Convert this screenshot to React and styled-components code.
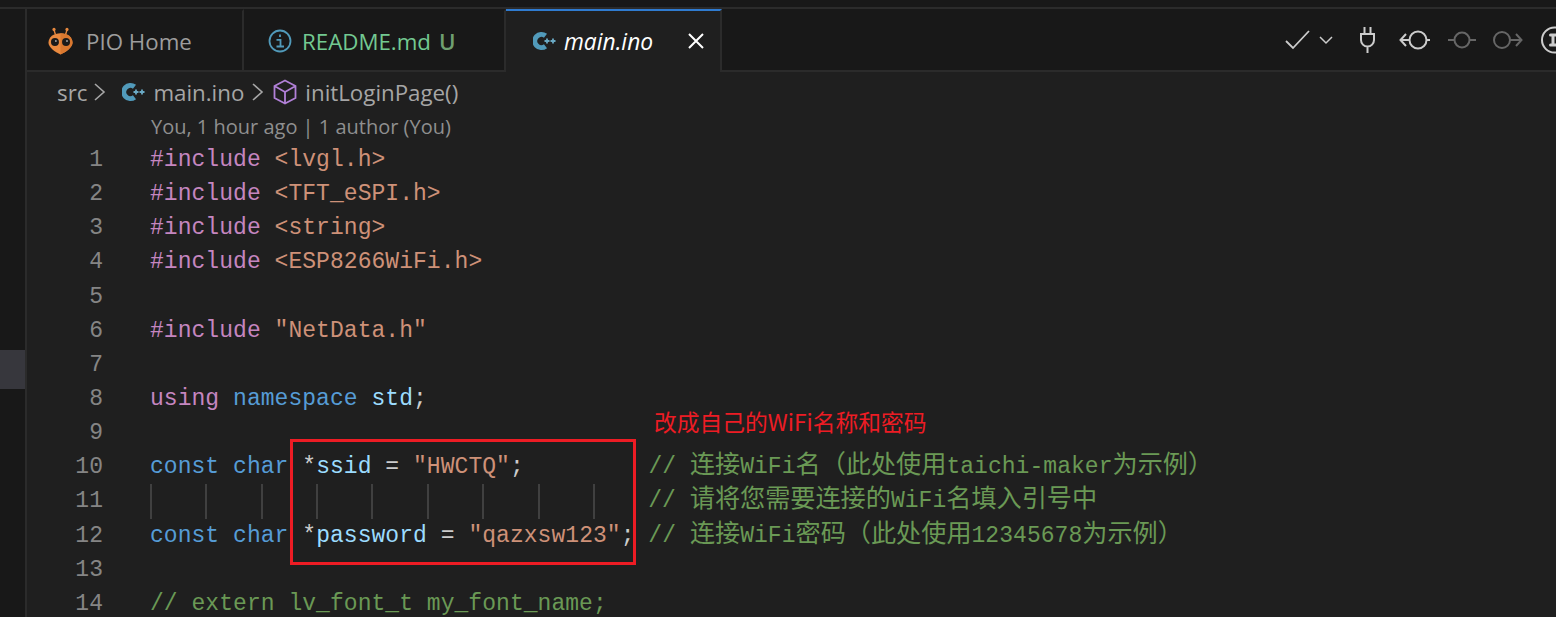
import React from 'react'
import styled, { createGlobalStyle } from 'styled-components'

const GlobalStyle = createGlobalStyle`
  html, body {
    margin: 0;
    padding: 0;
    background: #1f1f1f;
    overflow: hidden;
  }
`

const Window = styled.div`
  width: 1556px;
  height: 617px;
  display: flex;
  flex-direction: column;
  overflow: hidden;
  background: #1f1f1f;
  font-family: 'Open Sans', 'Noto Sans', sans-serif;
`

const TopStrip = styled.div`
  height: 7px;
  flex: none;
  background: #181818;
  border-bottom: 2px solid #2b2b2b;
`

const Body = styled.div`
  flex: 1;
  display: flex;
  min-height: 0;
`

const ActivityBar = styled.div`
  width: 25px;
  flex: none;
  background: #181818;
  border-right: 2px solid #2b2b2b;
  padding-top: 341px;
`

const ActivityItem = styled.div`
  height: 39px;
  background: #37373d;
`

const Main = styled.div`
  flex: 1;
  min-width: 0;
  display: flex;
  flex-direction: column;
  position: relative;
`

const TabBar = styled.div`
  height: 61px;
  flex: none;
  display: flex;
  background: #181818;
  border-bottom: 2px solid #2b2b2b;
`

const Tab = styled.div`
  width: ${p => p.$width}px;
  height: ${p => (p.$active ? '63px' : '61px')};
  flex: none;
  box-sizing: border-box;
  display: flex;
  align-items: center;
  padding-left: ${p => p.$pad}px;
  padding-bottom: ${p => (p.$active ? '2px' : '0')};
  background: ${p => (p.$active ? '#1f1f1f' : '#181818')};
  border-right: 2px solid #2b2b2b;
  border-top: 2px solid ${p => (p.$active ? '#2f7bd0' : '#181818')};
  font-size: ${p => (p.$active ? '22.8px' : '22.3px')};
  color: ${p => p.$color || '#9d9d9d'};
  font-style: ${p => (p.$active ? 'italic' : 'normal')};
`

const TabLabel = styled.span`
  margin-left: ${p => p.$gap}px;
  padding-top: 2px;
  white-space: pre;
`

const GitBadge = styled.span`
  margin-left: 8px;
  padding-top: 2px;
  color: #6f9f70;
  font-weight: 600;
`

const CloseBtn = styled.svg`
  margin-left: 34px;
  width: 18px;
  height: 18px;
`

const Actions = styled.div`
  margin-left: auto;
  display: flex;
  align-items: center;
  height: 100%;
`

const ActionIcon = styled.svg`
  flex: none;
  margin-left: ${p => p.$gap || 0}px;
  display: block;
`

const Crumbs = styled.div`
  height: 40px;
  flex: none;
  display: flex;
  align-items: center;
  padding-left: 30px;
  font-size: 22.3px;
  color: #a6a6a6;
`

const CrumbText = styled.span`
  margin-left: ${p => p.$gap || 0}px;
`

const Blame = styled.div`
  height: 31px;
  flex: none;
  padding-left: 124px;
  font-size: 20px;
  line-height: 29px;
  color: #8f8f8f;
`

const Editor = styled.div`
  font-family: 'Liberation Mono', monospace;
  font-size: 23px;
  letter-spacing: 0.04px;
`

const Line = styled.div`
  height: 34.15px;
  line-height: 34.15px;
  display: flex;
  white-space: pre;
`

const LineNo = styled.div`
  width: 76px;
  flex: none;
  text-align: right;
  color: #858585;
`

const Code = styled.div`
  margin-left: 47px;
  color: #cccccc;
  white-space: pre;
`

const GuideRow = styled.div`
  margin-left: 47px;
  display: flex;
  color: #cccccc;
`

const Guide = styled.span`
  width: 55.36px;
  flex: none;
  box-sizing: border-box;
  border-left: 2px solid #404040;
`

const Keyword = styled.span`
  color: #569cd6;
`
const Control = styled.span`
  color: #c586c0;
`
const Str = styled.span`
  color: #ce9178;
`
const Name = styled.span`
  color: #9cdcfe;
`
const Comment = styled.span`
  color: #6a9955;
`
const Wide = styled.span`
  font-family: 'Noto Sans CJK SC', sans-serif;
  font-size: 25.15px;
  line-height: 0;
  letter-spacing: 0;
`

const RedBox = styled.div`
  position: absolute;
  left: 263px;
  top: 430px;
  width: 346px;
  height: 126px;
  box-sizing: border-box;
  border: 3px solid #ed1c24;
`

const RedNote = styled.div`
  position: absolute;
  left: 627px;
  top: 398px;
  font-family: 'Noto Sans CJK SC', sans-serif;
  font-size: 22.75px;
  line-height: 30px;
  color: #ed1c24;
`

const CppIcon = () => (
  <svg width="24" height="20" viewBox="0 0 24 20" style={{ flex: 'none', display: 'block' }}>
    <path d="M12.500 4.800A6.600 6.600 0 1 0 12.500 15.200" fill="none" stroke="#519aba" strokeWidth="5" />
    <path d="M11.500 10h5M14 7.500v5M17.500 10h5M20 7.500v5" stroke="#6aa9c4" strokeWidth="1.800" />
  </svg>
)

const Chevron = () => (
  <svg width="14" height="20" viewBox="0 0 14 20" style={{ flex: 'none', display: 'block' }}>
    <path d="M2 2l9 8-9 8" fill="none" stroke="#a6a6a6" strokeWidth="1.600" />
  </svg>
)

export default function App() {
  return (
    <Window>
      <GlobalStyle />
      <TopStrip />
      <Body>
        <ActivityBar>
          <ActivityItem />
        </ActivityBar>
        <Main>
          <TabBar>
            <Tab $width={217} $pad={21}>
              <svg width="25" height="28" viewBox="0 0 27 30" style={{ flex: 'none' }}>
                <path d="M8 8L6.500 3M19 8l1.500-5" stroke="#e8893f" strokeWidth="1.500" />
                <circle cx="6.500" cy="2.500" r="1.700" fill="#e8893f" />
                <circle cx="20.500" cy="2.500" r="1.700" fill="#e8893f" />
                <path d="M13.500 6.500C6 6.500 .5 10.500 .5 17c0 5 8 11 13 12.500C18.500 28 26.500 22 26.500 17c0-6.500-5.500-10.500-13-10.500z" fill="#e8893f" />
                <path d="M13.500 6.500C21 6.500 26.500 10.500 26.500 17c0 5-8 11-13 12.500z" fill="#d9782f" />
                <circle cx="7.500" cy="16" r="4.300" fill="#1a1a1a" />
                <circle cx="19.500" cy="16" r="4.300" fill="#1a1a1a" />
                <circle cx="8.500" cy="15" r="1" fill="#a8a8a8" />
                <circle cx="20.500" cy="15" r="1" fill="#a8a8a8" />
              </svg>
              <TabLabel $gap={13}>PIO Home</TabLabel>
            </Tab>
            <Tab $width={262} $pad={24} $color="#73c991">
              <svg width="24" height="24" viewBox="0 0 24 24" style={{ flex: 'none' }}>
                <circle cx="12" cy="12" r="10.500" fill="none" stroke="#519aba" strokeWidth="1.800" />
                <path d="M12 5.500v2.500M8.500 10.800H12.500v6.400M8.500 17.500h7.500" fill="none" stroke="#519aba" strokeWidth="1.800" />
              </svg>
              <TabLabel $gap={10}>README.md</TabLabel>
              <GitBadge>U</GitBadge>
            </Tab>
            <Tab $width={216} $pad={27} $active $color="#ffffff">
              <CppIcon />
              <TabLabel $gap={7}>main.ino</TabLabel>
              <CloseBtn viewBox="0 0 18 18">
                <path d="M2 2l14 14M16 2L2 16" stroke="#ffffff" strokeWidth="2" />
              </CloseBtn>
            </Tab>
            <Actions>
              <ActionIcon width="26" height="22" viewBox="0 0 26 22">
                <path d="M1 12l7 7L24 2" fill="none" stroke="#cccccc" strokeWidth="1.800" />
              </ActionIcon>
              <ActionIcon $gap={8} width="14" height="10" viewBox="0 0 14 10">
                <path d="M1 2l6 6 6-6" fill="none" stroke="#cccccc" strokeWidth="1.500" />
              </ActionIcon>
              <ActionIcon $gap={27} width="15" height="27" viewBox="0 0 15 27">
                <path d="M4.500 1v7M10.500 1v7M1 8h13v6a6.500 6.500 0 0 1-13 0zM7.500 20.500V27" fill="none" stroke="#cccccc" strokeWidth="2" />
              </ActionIcon>
              <ActionIcon $gap={24} width="31" height="20" viewBox="0 0 31 20">
                <circle cx="19" cy="10" r="8.500" fill="none" stroke="#cccccc" strokeWidth="2" />
                <path d="M10.500 10H1.500M7 4l-5.500 6L7 16M27.500 10H31" fill="none" stroke="#cccccc" strokeWidth="2" />
              </ActionIcon>
              <ActionIcon $gap={18} width="28" height="20" viewBox="0 0 28 20">
                <circle cx="14" cy="10" r="7.500" fill="none" stroke="#666666" strokeWidth="2" />
                <path d="M0 10h6.500M21.500 10H28" stroke="#666666" strokeWidth="2" />
              </ActionIcon>
              <ActionIcon $gap={17} width="30" height="20" viewBox="0 0 30 20">
                <circle cx="9" cy="10" r="8" fill="none" stroke="#666666" strokeWidth="2" />
                <path d="M17 10h11.500M23 4l5.500 6-5.500 6" fill="none" stroke="#666666" strokeWidth="2" />
              </ActionIcon>
              <ActionIcon $gap={18} width="15" height="28" viewBox="0 0 15 28">
                <circle cx="13.500" cy="14" r="12.500" fill="none" stroke="#cccccc" strokeWidth="2" />
                <path d="M9.500 9h6M9.500 19h6M12 9v10" fill="none" stroke="#cccccc" strokeWidth="3" strokeLinecap="round" />
              </ActionIcon>
            </Actions>
          </TabBar>
          <Crumbs>
            <CrumbText>src</CrumbText>
            <CrumbText $gap={6} as="span"><Chevron /></CrumbText>
            <CrumbText $gap={15} as="span"><CppIcon /></CrumbText>
            <CrumbText $gap={7}>main.ino</CrumbText>
            <CrumbText $gap={7} as="span"><Chevron /></CrumbText>
            <ActionIcon $gap={8} width="24" height="26" viewBox="0 0 24 26">
              <path d="M12 1.500L22.500 7v12L12 24.500 1.500 19V7zM1.500 7L12 13l10.500-6M12 13v11.500" fill="none" stroke="#b180d7" strokeWidth="1.800" />
            </ActionIcon>
            <CrumbText $gap={8}>initLoginPage()</CrumbText>
          </Crumbs>
          <Blame>You, 1 hour ago | 1 author (You)</Blame>
          <Editor>
            <Line><LineNo>1</LineNo><Code><Control>#include</Control> <Str>&lt;lvgl.h&gt;</Str></Code></Line>
            <Line><LineNo>2</LineNo><Code><Control>#include</Control> <Str>&lt;TFT_eSPI.h&gt;</Str></Code></Line>
            <Line><LineNo>3</LineNo><Code><Control>#include</Control> <Str>&lt;string&gt;</Str></Code></Line>
            <Line><LineNo>4</LineNo><Code><Control>#include</Control> <Str>&lt;ESP8266WiFi.h&gt;</Str></Code></Line>
            <Line><LineNo>5</LineNo></Line>
            <Line><LineNo>6</LineNo><Code><Control>#include</Control> <Str>"NetData.h"</Str></Code></Line>
            <Line><LineNo>7</LineNo></Line>
            <Line><LineNo>8</LineNo><Code><Control>using</Control> <Keyword>namespace</Keyword> <Name>std</Name>;</Code></Line>
            <Line><LineNo>9</LineNo></Line>
            <Line>
              <LineNo>10</LineNo>
              <Code><Keyword>const</Keyword> <Keyword>char</Keyword> *<Name>ssid</Name> = <Str>"HWCTQ"</Str>;{'         '}<Comment>// <Wide>连接</Wide>WiFi<Wide>名（此处使用</Wide>taichi-maker<Wide>为示例）</Wide></Comment></Code>
            </Line>
            <Line>
              <LineNo>11</LineNo>
              <GuideRow>
                {Array.from({ length: 9 }, (_, i) => <Guide key={i} />)}
                <Comment>// <Wide>请将您需要连接的</Wide>WiFi<Wide>名填入引号中</Wide></Comment>
              </GuideRow>
            </Line>
            <Line>
              <LineNo>12</LineNo>
              <Code><Keyword>const</Keyword> <Keyword>char</Keyword> *<Name>password</Name> = <Str>"qazxsw123"</Str>;{' '}<Comment>// <Wide>连接</Wide>WiFi<Wide>密码（此处使用</Wide>12345678<Wide>为示例）</Wide></Comment></Code>
            </Line>
            <Line><LineNo>13</LineNo></Line>
            <Line><LineNo>14</LineNo><Code><Comment>// extern lv_font_t my_font_name;</Comment></Code></Line>
          </Editor>
          <RedBox />
          <RedNote>改成自己的WiFi名称和密码</RedNote>
        </Main>
      </Body>
    </Window>
  )
}
